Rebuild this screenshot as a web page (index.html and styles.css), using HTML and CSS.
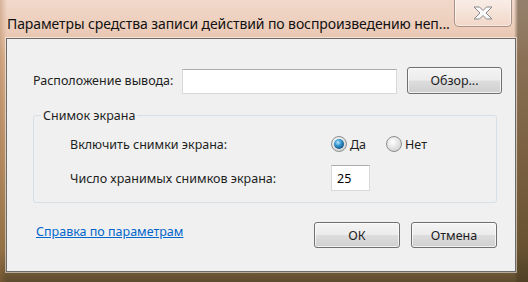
FILE: index.html
```html
<!DOCTYPE html>
<html lang="ru">
<head>
  <meta charset="UTF-8">
  <title>Параметры средства записи действий</title>
  <link rel="stylesheet" href="styles.css">
</head>
<body>
  <div class="window">
    <div class="titlebar">
      <span class="title">Параметры средства записи действий по воспроизведению неп...</span>
      <button class="close" aria-label="Закрыть">
        <svg width="24" height="16" viewBox="0 0 24 16">
          <path d="M3 2 L8.5 2 L12 5.5 L15.5 2 L21 2 L15 8 L21 14 L15.5 14 L12 10.5 L8.5 14 L3 14 L9 8 Z"
                fill="#fafafa" stroke="#8a8a8a" stroke-width="1" stroke-linejoin="round"/>
        </svg>
      </button>
    </div>

    <div class="client">
      <div class="output-row">
        <label class="output-label">Расположение вывода:</label>
        <input class="text-field output-field" type="text">
        <button class="btn browse">Обзор...</button>
      </div>

      <fieldset class="group">
        <legend>Снимок экрана</legend>
        <div class="group-row">
          <span class="group-label">Включить снимки экрана:</span>
          <label class="radio"><span class="dot checked"></span>Да</label>
          <label class="radio"><span class="dot"></span>Нет</label>
        </div>
        <div class="group-row">
          <span class="group-label">Число хранимых снимков экрана:</span>
          <input class="text-field count" type="text" value="25">
        </div>
      </fieldset>

      <div class="footer">
        <a class="help" href="#">Справка по параметрам</a>
        <div class="actions">
          <button class="btn">ОК</button>
          <button class="btn">Отмена</button>
        </div>
      </div>
    </div>
  </div>
</body>
</html>
```

FILE: styles.css
```css
html, body {
  margin: 0;
  padding: 0;
  width: 528px;
  height: 282px;
  overflow: hidden;
}

body {
  font-family: 'Noto Sans', 'DejaVu Sans', sans-serif;
  font-size: 12.5px;
  color: #1e1e1e;
}

.window {
  width: 528px;
  height: 282px;
  box-sizing: border-box;
  padding: 0 12px 10px 6px;
  display: flex;
  flex-direction: column;
  background:
    linear-gradient(90deg, rgba(160,110,60,0.35) 0, rgba(160,110,60,0) 7px, rgba(0,0,0,0) 514px, rgba(70,55,30,0.55) 518px),
    linear-gradient(180deg, #f1d8ca 0, #ecccb9 30px, #dcb596 60px, #b8916a 160px, #8e7148 250px, #5e4c2e 282px);
}

.titlebar {
  height: 38px;
  display: flex;
  align-items: flex-start;
  justify-content: space-between;
}

.title {
  margin-top: 14px;
  padding-left: 1px;
  font-size: 14px;
  color: #111;
  white-space: nowrap;
  letter-spacing: -0.1px;
}

.close {
  width: 58px;
  height: 28px;
  margin-top: -1px;
  margin-right: 4px;
  padding: 0;
  border: 1px solid #a89186;
  border-top: none;
  border-radius: 0 0 5px 5px;
  background: linear-gradient(180deg, rgba(255,255,255,0.55), rgba(255,240,232,0.25));
  box-shadow: inset 0 0 0 1px rgba(255,255,255,0.5);
  display: flex;
  align-items: center;
  justify-content: center;
}

.client {
  flex: 1;
  background: #f0f0f0;
  border: 1px solid #6e6a66;
  box-shadow: 0 0 0 1px rgba(255,255,255,0.5);
  padding: 28px 13px 0 26px;
  display: flex;
  flex-direction: column;
}

.output-row {
  display: flex;
  align-items: center;
  height: 27px;
}

.output-label {
  width: 149px;
}

.text-field {
  box-sizing: border-box;
  border: 1px solid #d7dadd;
  border-top-color: #abadb3;
  background: #fff;
  font-family: inherit;
  font-size: 12.5px;
  padding: 0 5px;
  outline: none;
}

.output-field {
  width: 215px;
  height: 25px;
  margin-top: 2px;
}

.btn {
  box-sizing: border-box;
  height: 26px;
  border: 1px solid #707070;
  border-radius: 3px;
  background: linear-gradient(180deg, #f4f4f4 0, #ececec 48%, #dddddd 52%, #cfcfcf 100%);
  box-shadow: inset 0 0 0 1px rgba(255,255,255,0.7);
  font-family: inherit;
  font-size: 12.5px;
  color: #1e1e1e;
  padding: 0;
}

.browse {
  width: 95px;
  height: 27px;
  margin-left: 10px;
}

.group {
  margin: 13px 5px 0 0;
  padding: 5px 0 0 36px;
  height: 96px;
  box-sizing: border-box;
  border: 1px solid #d5dfe5;
  border-radius: 3px;
}

.group legend {
  padding: 0 2px;
  margin-left: -29px;
}

.group-row {
  display: flex;
  align-items: center;
  height: 30px;
  margin-bottom: 4px;
}

.group-label {
  width: 261px;
}

.radio {
  display: flex;
  align-items: center;
  margin-right: 20px;
}

.dot {
  width: 14px;
  height: 14px;
  border-radius: 50%;
  border: 1px solid #8e8f8f;
  background: radial-gradient(circle at 40% 35%, #ffffff, #cfcfcf 85%);
  margin-right: 3px;
  position: relative;
}

.dot.checked::after {
  content: '';
  position: absolute;
  left: 2px;
  top: 2px;
  width: 10px;
  height: 10px;
  border-radius: 50%;
  background: radial-gradient(circle at 40% 35%, #b8ecff 0, #3a9ad0 35%, #17649a 65%, #0b3557 100%);
}

.count {
  width: 39px;
  height: 26px;
}

.footer {
  display: flex;
  align-items: center;
  justify-content: space-between;
  margin-top: 19px;
  margin-right: 5px;
  height: 26px;
}

.help {
  color: #0066cc;
  margin-left: 3px;
  margin-top: -7px;
}

.actions {
  display: flex;
  gap: 11px;
}

.actions .btn {
  width: 86px;
}
```
